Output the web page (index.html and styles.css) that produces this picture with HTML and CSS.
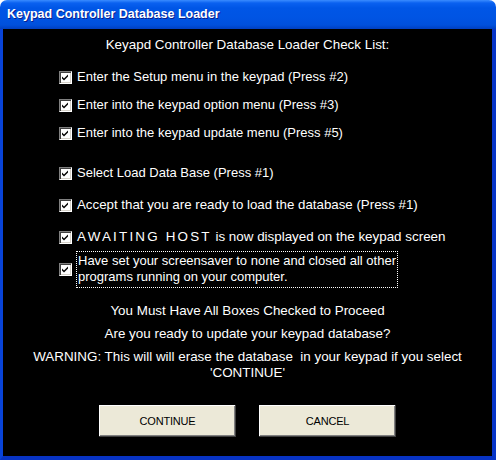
FILE: index.html
```html
<!DOCTYPE html>
<html lang="en">
<head>
    <meta charset="UTF-8">
    <meta name="viewport" content="width=device-width, initial-scale=1.0">
    <title>Keypad Controller Database Loader</title>
    <link rel="stylesheet" href="styles.css">
</head>
<body>
    <div class="window">
        <div class="titlebar">Keypad Controller Database Loader</div>

        <div class="client">
            <div class="heading">Keyapd Controller Database Loader Check List:</div>

            <div class="checklist">
                <label class="item row1"><span class="cb"><svg viewBox="0 0 9 9"><path d="M1 3.5l2 2 4-4v2l-4 4-2-2z"/></svg></span>Enter the Setup menu in the keypad (Press #2)</label>
                <label class="item row2"><span class="cb"><svg viewBox="0 0 9 9"><path d="M1 3.5l2 2 4-4v2l-4 4-2-2z"/></svg></span>Enter into the keypad option menu (Press #3)</label>
                <label class="item row3"><span class="cb"><svg viewBox="0 0 9 9"><path d="M1 3.5l2 2 4-4v2l-4 4-2-2z"/></svg></span>Enter into the keypad update menu (Press #5)</label>
                <label class="item row4"><span class="cb"><svg viewBox="0 0 9 9"><path d="M1 3.5l2 2 4-4v2l-4 4-2-2z"/></svg></span>Select Load Data Base (Press #1)</label>
                <label class="item row5"><span class="cb"><svg viewBox="0 0 9 9"><path d="M1 3.5l2 2 4-4v2l-4 4-2-2z"/></svg></span>Accept that you are ready to load the database (Press #1)</label>
                <label class="item row6"><span class="cb"><svg viewBox="0 0 9 9"><path d="M1 3.5l2 2 4-4v2l-4 4-2-2z"/></svg></span><span><span class="caps">AWAITING HOST</span> is now displayed on the keypad screen</span></label>
                <label class="item row7"><span class="cb"><svg viewBox="0 0 9 9"><path d="M1 3.5l2 2 4-4v2l-4 4-2-2z"/></svg></span><span class="focus">Have set your screensaver to none and closed all other<br>programs running on your computer.</span></label>
            </div>

            <div class="notice must">You Must Have All Boxes Checked to Proceed</div>
            <div class="notice ready">Are you ready to update your keypad database?</div>
            <div class="notice warning">WARNING: This will will erase the database&nbsp; in your keypad if you select<br>'CONTINUE'</div>

            <div class="buttons">
                <button class="btn">CONTINUE</button>
                <button class="btn">CANCEL</button>
            </div>
        </div>
    </div>
</body>
</html>
```

FILE: styles.css
```css
body {
    margin: 0;
    background-color: #ffffff;
    font-family: "Liberation Sans", Arial, sans-serif;
}

.window {
    width: 496px;
    height: 460px;
    display: flex;
    flex-direction: column;
}

.titlebar {
    height: 29px;
    box-sizing: border-box;
    padding: 6px 0 0 7px;
    border-radius: 7px 7px 0 0;
    background: linear-gradient(to bottom, #3a8cff 0px, #0a61f0 3px, #0056e6 8px, #0054e3 18px, #0050dc 25px, #003fc0 29px);
    color: #ffffff;
    font-family: "Liberation Sans", Arial, sans-serif;
    font-weight: bold;
    font-size: 12.5px;
    line-height: 17px;
    text-shadow: 1px 1px #0a1e8c;
}

.client {
    flex: 1;
    background-color: #000000;
    border-left: 3px solid #0843d8;
    border-right: 4px solid #0735c8;
    border-bottom: 4px solid #0733c4;
    color: #ffffff;
    font-size: 13.4px;
    line-height: 16px;
    display: flex;
    flex-direction: column;
}

.heading {
    margin-top: 8px;
    text-align: center;
}

.checklist {
    padding-left: 56px;
    display: flex;
    flex-direction: column;
    font-size: 13px;
}

.item {
    display: flex;
    align-items: center;
    gap: 5px;
}

.row1 { margin-top: 16px; }
.row2 { margin-top: 12px; }
.row3 { margin-top: 12px; }
.row4 { margin-top: 24px; }
.row5 { margin-top: 16px; font-size: 13.3px; }
.row6 { margin-top: 16px; font-size: 13.4px; }
.row7 { margin-top: 6px; gap: 4px; }

.caps {
    letter-spacing: 2.2px;
}

.cb {
    width: 13px;
    height: 13px;
    box-sizing: border-box;
    flex-shrink: 0;
    background-color: #ffffff;
    border: 1px solid;
    border-color: #808080 #ffffff #ffffff #808080;
    box-shadow: inset 1px 1px #404040, inset -1px -1px #d4d0c8;
    display: flex;
    align-items: center;
    justify-content: center;
}

.cb svg {
    width: 9px;
    height: 9px;
    fill: #000000;
}

.focus {
    padding: 1px 1px 2px 1px;
    border: 1px dotted #ffffff;
}

.notice {
    text-align: center;
}

.must { margin-top: 15px; }
.ready { margin-top: 7px; }
.warning { margin-top: 7px; }

.buttons {
    margin-top: 24px;
    padding-left: 96px;
    display: flex;
    gap: 23px;
}

.btn {
    width: 137px;
    height: 32px;
    background-color: #ece9d8;
    border: none;
    box-shadow: inset -1px -1px #404040, inset 1px 1px #ffffff, inset -2px -2px #808080, inset 2px 2px #ece9d8;
    font-family: "Liberation Sans", Arial, sans-serif;
    font-size: 11px;
    letter-spacing: -0.2px;
    color: #000000;
    padding: 0;
}
```
